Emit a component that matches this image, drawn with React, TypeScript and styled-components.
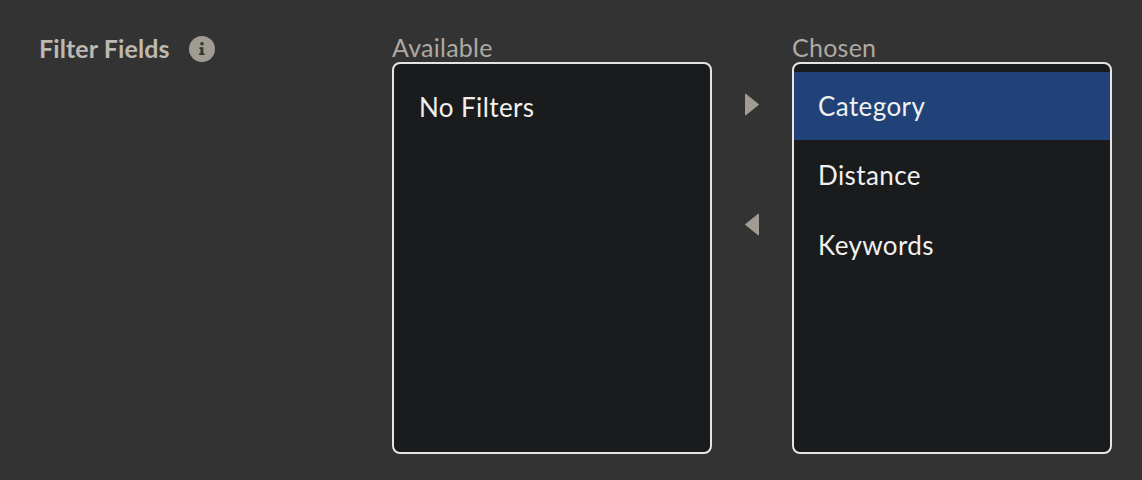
import { createGlobalStyle } from "styled-components";
import styled from "styled-components";

const GlobalStyle = createGlobalStyle`
    html, body {
        margin: 0;
        padding: 0;
        background-color: #333333;
    }
    * {
        box-sizing: border-box;
    }
`;

const Page = styled.div`
    display: flex;
    align-items: flex-start;
    width: 1142px;
    height: 480px;
    padding: 32px 30px 0 39px;
    background-color: #333333;
    font-family: Lato, "Noto Sans", sans-serif;
    overflow: hidden;
`;

const LabelRow = styled.div`
    display: flex;
    align-items: center;
    flex: 0 0 353px;
    height: 31px;
    gap: 19px;
`;

const FieldLabel = styled.span`
    color: #bdb9b2;
    font-size: 25px;
    font-weight: 700;
    letter-spacing: 0.1px;
`;

const InfoIcon = styled.svg`
    display: block;
    width: 26px;
    height: 26px;
    margin-top: 3px;
`;

const ListColumn = styled.div`
    display: flex;
    flex-direction: column;
    flex: 0 0 320px;
`;

const ColumnLabel = styled.div`
    height: 30px;
    color: #aeaaa2;
    font-size: 25px;
    line-height: 30px;
    letter-spacing: 0.25px;
`;

const ListBox = styled.div`
    height: 392px;
    padding: 8px 0;
    border: 2px solid #e5e5e3;
    border-radius: 8px;
    background-color: #1a1b1d;
    overflow: hidden;
`;

const ListItem = styled.div<{ $selected?: boolean }>`
    display: flex;
    align-items: center;
    height: ${(props) => (props.$selected ? "68px" : "70px")};
    padding-left: 24px;
    background-color: ${(props) => (props.$selected ? "#204278" : "transparent")};
    color: #f0f0ee;
    font-size: 26px;
    letter-spacing: 0.4px;
`;

const EmptyItem = styled(ListItem)`
    height: 70px;
    padding-left: 25px;
`;

const MoveButtons = styled.div`
    display: flex;
    flex-direction: column;
    align-items: center;
    flex: 0 0 80px;
    gap: 97px;
    padding-top: 61px;
`;

const Arrow = styled.svg`
    display: block;
    width: 14px;
    height: 23px;
`;

export default function App() {
    return (
        <>
            <GlobalStyle />
            <Page>
                <LabelRow>
                    <FieldLabel>Filter Fields</FieldLabel>
                    <InfoIcon viewBox="0 0 26 26">
                        <circle cx="13" cy="13" r="13" fill="#a09c92" />
                        <circle cx="13" cy="7.8" r="1.8" fill="#333333" />
                        <path d="M10.4 11.2h3.9v6h1.3V19h-5.4v-1.8h1.3V13h-1.1z" fill="#333333" />
                    </InfoIcon>
                </LabelRow>
                <ListColumn>
                    <ColumnLabel>Available</ColumnLabel>
                    <ListBox>
                        <EmptyItem>No Filters</EmptyItem>
                    </ListBox>
                </ListColumn>
                <MoveButtons>
                    <Arrow viewBox="0 0 14 23">
                        <path d="M1.2 1 13.6 10.9a.8.8 0 0 1 0 1.2L1.2 22a.7.7 0 0 1-1.2-.5V1.5A.7.7 0 0 1 1.2 1z" fill="#a09c92" />
                    </Arrow>
                    <Arrow viewBox="0 0 14 23">
                        <path d="M12.8 1 .4 10.9a.8.8 0 0 0 0 1.2L12.8 22a.7.7 0 0 0 1.2-.5V1.5A.7.7 0 0 0 12.8 1z" fill="#a09c92" />
                    </Arrow>
                </MoveButtons>
                <ListColumn>
                    <ColumnLabel>Chosen</ColumnLabel>
                    <ListBox>
                        <ListItem $selected>Category</ListItem>
                        <ListItem>Distance</ListItem>
                        <ListItem>Keywords</ListItem>
                    </ListBox>
                </ListColumn>
            </Page>
        </>
    );
}
